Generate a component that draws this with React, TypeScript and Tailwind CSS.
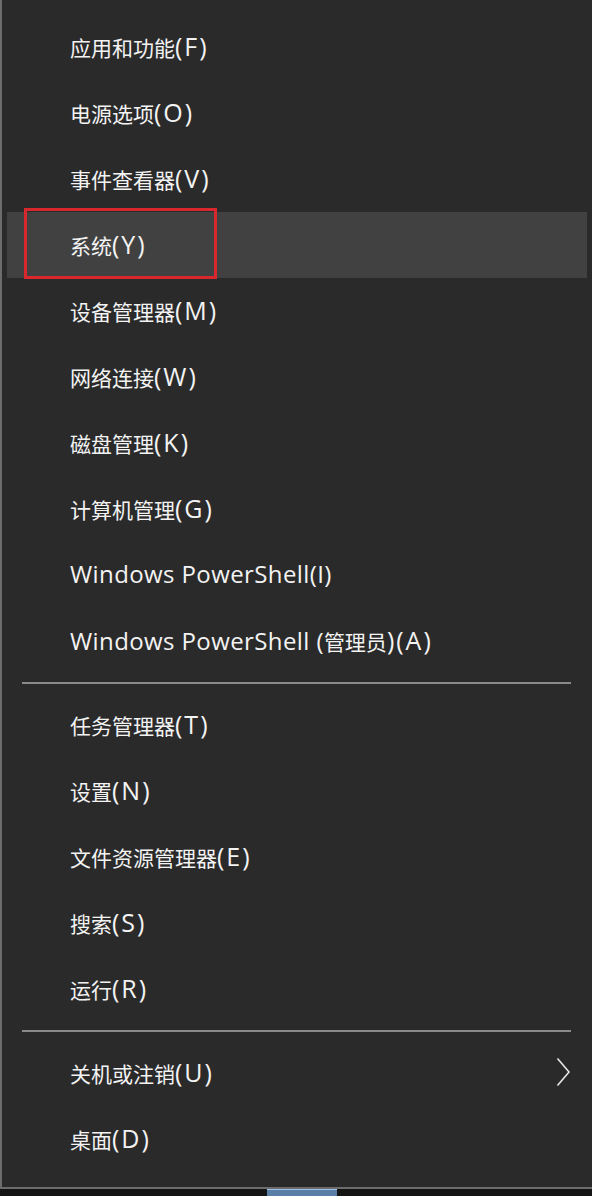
import React from 'react';

const groupA = [
  '应用和功能(F)',
  '电源选项(O)',
  '事件查看器(V)',
  '系统(Y)',
  '设备管理器(M)',
  '网络连接(W)',
  '磁盘管理(K)',
  '计算机管理(G)',
  'Windows PowerShell(I)',
  'Windows PowerShell (管理员)(A)',
];

const groupB = ['任务管理器(T)', '设置(N)', '文件资源管理器(E)', '搜索(S)', '运行(R)'];

// CJK runs render smaller than the Latin runs in the screenshot
function Label({ text }: { text: string }) {
  const parts = text.split(/([\u4e00-\u9fff]+)/).filter(Boolean);
  return (
    <span className="text-[#f3f3f3] whitespace-pre leading-none">
      {parts.map((p, i) => {
        if (/[\u4e00-\u9fff]/.test(p)) {
          return (
            <span key={i} className="text-[21px] font-['Noto_Sans_CJK_SC',sans-serif]">
              {p}
            </span>
          );
        }
        if (/^\)?\(.\)$/.test(p)) {
          return (
            <span key={i} className="text-[25px] tracking-[2px] font-['Open_Sans',sans-serif]">
              {p}
            </span>
          );
        }
        return (
          <span key={i} className="text-[24px] tracking-[0.4px] font-['Open_Sans',sans-serif]">
            {p}
          </span>
        );
      })}
    </span>
  );
}

function Row({ label, active, arrow }: { label: string; active?: boolean; arrow?: boolean }) {
  if (active) {
    return (
      <div className="relative h-[66px] mx-[5px] bg-[#414141] flex items-center pl-[63px] pb-[2px]">
        <Label text={label} />
        <div className="absolute left-[17px] top-[-4px] w-[193px] h-[71px] border-[3px] border-[#d8272d]" />
      </div>
    );
  }
  return (
    <div className="h-[66px] flex items-center pl-[68px] pr-[21px] pb-[2px]">
      <Label text={label} />
      {arrow && (
        <svg className="ml-auto" width="15" height="30" viewBox="0 0 15 30" fill="none">
          <path d="M1.5 1.5 L13 15 L1.5 28.5" stroke="#e8e8e8" strokeWidth="1.6" />
        </svg>
      )}
    </div>
  );
}

function Separator() {
  return <div className="ml-[20px] w-[549px] h-[2px] my-[8px] bg-[#8a8a8a]" />;
}

export default function App() {
  return (
    <div className="w-[592px] h-[1196px] bg-[#141414] flex flex-col">
      <div className="h-[1189px] bg-[#2a2a2a] border-l-2 border-b-2 border-[#6c6c6c] pt-[14px] flex flex-col">
        {groupA.map((l) => (
          <Row key={l} label={l} active={l === '系统(Y)'} />
        ))}
        <Separator />
        {groupB.map((l) => (
          <Row key={l} label={l} />
        ))}
        <Separator />
        <Row label="关机或注销(U)" arrow />
        <Row label="桌面(D)" />
      </div>
      <div className="flex-1 flex">
        <div className="ml-[267px] w-[70px] bg-[#5b7ea6] border-t border-[#9cc0e6]" />
      </div>
    </div>
  );
}
